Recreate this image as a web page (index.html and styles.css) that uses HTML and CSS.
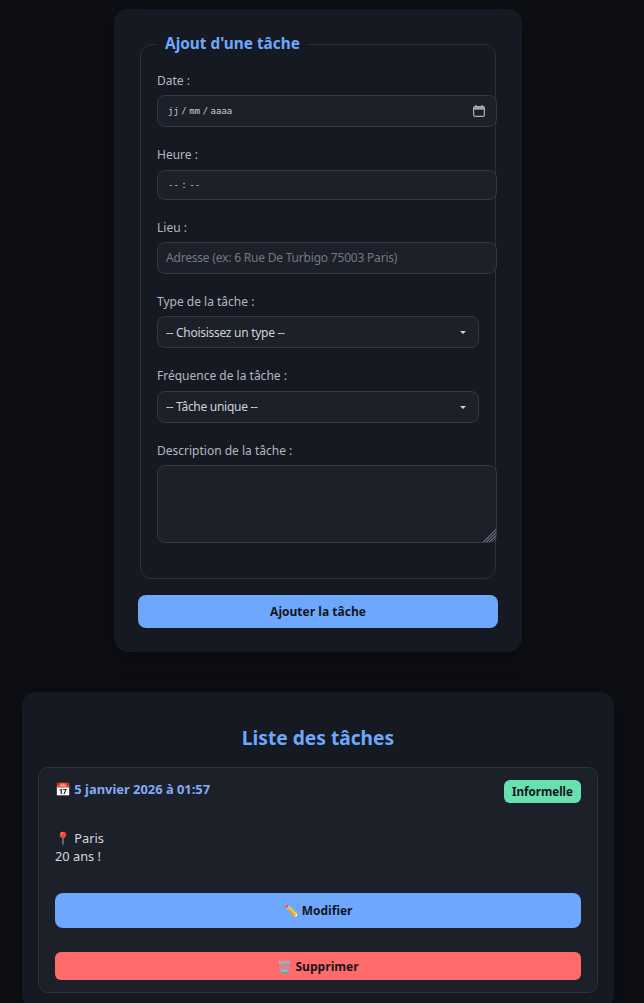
FILE: index.html
```html
<!DOCTYPE html>
<html lang="fr">
<head>
    <meta charset="UTF-8">
    <meta name="viewport" content="width=device-width, initial-scale=1.0">
    <title>Tâches</title>
    <link rel="stylesheet" href="styles.css">
</head>
<body>

<form class="task-form">
    <fieldset class="form-group">
        <legend>Ajout d'une tâche</legend>

        <label for="date">Date :</label>
        <div class="fake-input date-input" id="date">
            <span>jj / mm / aaaa</span>
            <svg class="calendar-icon" width="12" height="12" viewBox="0 0 12 12" fill="none" stroke="#a9adb6">
                <rect x="0.6" y="1.6" width="10.8" height="9.8" rx="1.6" stroke-width="1.2"/>
                <path d="M0.6 3.4h10.8" stroke-width="2.4"/>
                <path d="M3 0v2M9 0v2" stroke-width="1.3"/>
            </svg>
        </div>

        <label class="label-tall" for="time">Heure :</label>
        <div class="fake-input time-input" id="time"><span>-- : --</span></div>

        <label for="lieu">Lieu :</label>
        <input class="text-input" type="text" id="lieu" placeholder="Adresse (ex: 6 Rue De Turbigo 75003 Paris)">

        <label for="type">Type de la tâche :</label>
        <div class="select-wrap">
            <select id="type">
                <option>-- Choisissez un type --</option>
            </select>
        </div>

        <label class="label-tall" for="freq">Fréquence de la tâche :</label>
        <div class="select-wrap">
            <select id="freq" class="select-freq">
                <option>-- Tâche unique --</option>
            </select>
        </div>

        <label for="desc">Description de la tâche :</label>
        <textarea id="desc"></textarea>
    </fieldset>

    <button type="button" class="btn btn-add">Ajouter la tâche</button>
</form>

<section class="task-list">
    <h2>Liste des tâches</h2>

    <div class="task-card">
        <div class="task-head">
            <strong class="task-date">📅 5 janvier 2026 à 01:57</strong>
            <span class="badge">Informelle</span>
        </div>
        <p class="task-text">📍 Paris<br>20 ans !</p>
        <button type="button" class="btn btn-edit">✏️ Modifier</button>
        <button type="button" class="btn btn-delete">🗑️ Supprimer</button>
    </div>
</section>

</body>
</html>
```

FILE: styles.css
```css
html, body {
    height: 1003px;
    overflow: hidden;
}
body {
    margin: 0;
    padding: 9px 8px 0 0;
    background-color: #0d0f14;
    color: #c9ccd4;
    display: flex;
    flex-direction: column;
    align-items: center;
    font-family: "Noto Sans", sans-serif;
    font-size: 12px;
}
.task-form {
    width: 360px;
    padding: 24px;
    background-color: #151921;
    border-radius: 14px;
    box-shadow: 0 4px 24px rgba(0, 0, 0, 0.4);
    flex-shrink: 0;
}
fieldset {
    min-width: 0;
    margin: 0 2px 16px;
    padding: 17px 16px 35px;
    border: 1px solid #2c303d;
    border-radius: 12px;
}
legend {
    padding: 0 8px;
    color: #6ea8fe;
    font-size: 15.36px;
    font-weight: 700;
    line-height: 22px;
}
label {
    display: block;
    margin: 0 0 6px;
    font-size: 12px;
    line-height: 17px;
    color: #b4b8c2;
}
.label-tall {
    margin-bottom: 7px;
}
.fake-input, .text-input, textarea {
    box-sizing: content-box;
    width: 322px;
    padding: 8px;
    background-color: #1c2029;
    border: 1px solid #343846;
    border-radius: 8px;
    color: #c9ccd4;
    margin: 0 0 19px;
    display: block;
}
.fake-input {
    font-family: "DejaVu Sans Mono", monospace;
    font-size: 9px;
    line-height: 14px;
    word-spacing: -2.9px;
    display: flex;
    align-items: center;
    justify-content: space-between;
}
.fake-input span {
    padding-left: 2px;
}
.date-input {
    height: 14px;
}
.time-input {
    height: 12px;
}
.calendar-icon {
    flex-shrink: 0;
    margin-right: 3px;
}
.text-input {
    height: 14px;
    padding-top: 7px;
    padding-bottom: 9px;
    font-family: "Noto Sans", sans-serif;
    font-size: 12px;
    letter-spacing: -0.2px;
    outline: none;
}
.text-input::placeholder {
    color: #747885;
}
.select-wrap {
    position: relative;
    width: 322px;
    margin: 0 0 19px;
}
.select-wrap::after {
    content: "";
    position: absolute;
    top: 15px;
    right: 13px;
    border-left: 3px solid transparent;
    border-right: 3px solid transparent;
    border-top: 3px solid #d0d2d8;
    pointer-events: none;
}
select {
    display: block;
    width: 100%;
    height: 32px;
    padding: 0 8px;
    appearance: none;
    background-color: #1c2029;
    border: 1px solid #343846;
    border-radius: 8px;
    color: #d0d2d8;
    font-family: "Noto Sans", sans-serif;
    font-size: 12px;
    letter-spacing: -0.28px;
}
.select-freq {
    padding-bottom: 2px;
}
textarea {
    height: 60px;
    margin-bottom: 0;
}
textarea::-webkit-resizer {
    background-image: linear-gradient(135deg, #1c2029 50%, transparent 50%), repeating-linear-gradient(135deg, #5a5d68 0 1px, transparent 1px 2px);
}
.btn {
    display: block;
    width: 100%;
    border: none;
    border-radius: 8px;
    color: #12151c;
    font-family: "Open Sans", sans-serif;
    font-size: 12px;
    font-weight: 700;
    cursor: pointer;
}
.btn-add {
    height: 33px;
    background-color: #6ea8fe;
}
.task-list {
    width: 560px;
    margin-top: 40px;
    padding: 32px 16px 16px;
    background-color: #151921;
    border-radius: 14px;
    box-shadow: 0 4px 24px rgba(0, 0, 0, 0.4);
    flex-shrink: 0;
}
h2 {
    margin: 0 0 16px;
    text-align: center;
    font-size: 19.2px;
    line-height: 27px;
    color: #6ea8fe;
}
.task-card {
    padding: 12px 16px 12px;
    background-color: #1c2029;
    border: 1px solid #2c303d;
    border-radius: 10px;
}
.task-head {
    display: flex;
    justify-content: space-between;
    align-items: flex-start;
}
.task-date {
    color: #85aaf5;
    font-size: 12.9px;
    line-height: 18px;
}
.badge {
    padding: 3px 8px;
    background-color: #69e0af;
    border-radius: 6px;
    color: #12151c;
    font-size: 11.6px;
    font-weight: 700;
    line-height: 17px;
}
.task-text {
    margin: 26px 0 28px;
    color: #d6d8de;
    font-size: 12.8px;
    line-height: 18px;
}
.btn-edit {
    height: 35px;
    margin-bottom: 24px;
    background-color: #6ea8fe;
}
.btn-delete {
    height: 28px;
    border-radius: 6px;
    background-color: #ff6b6b;
}
```
